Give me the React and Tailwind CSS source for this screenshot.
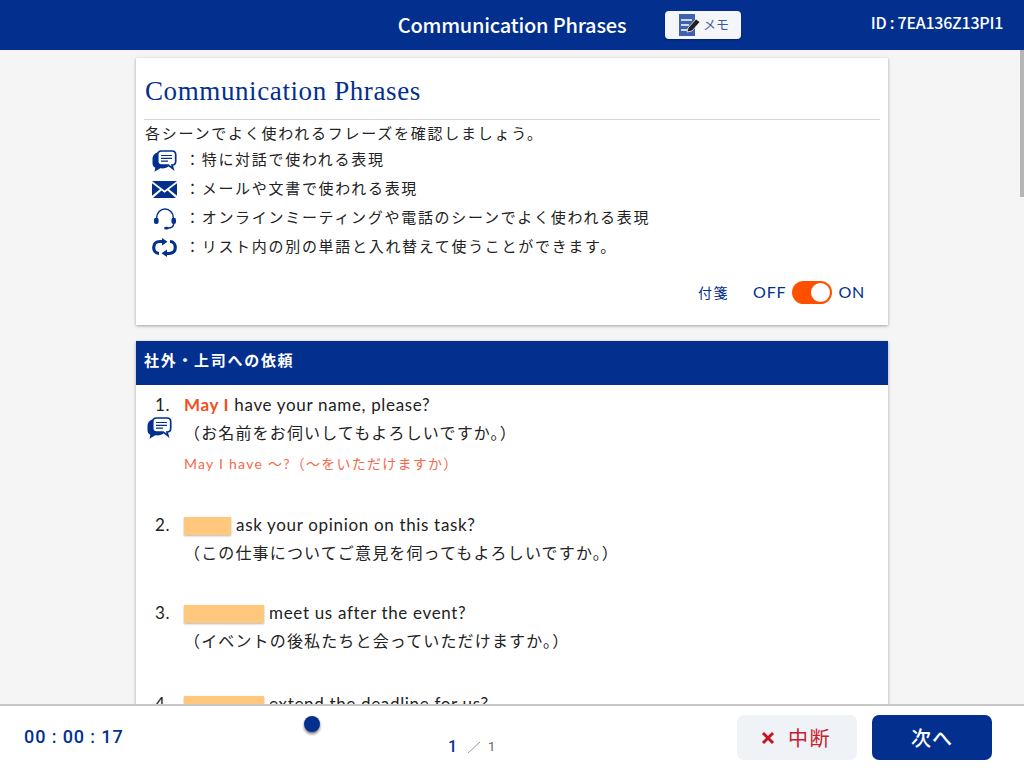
const jp = "font-['Lato','Noto_Sans_CJK_JP',sans-serif]";

function Chat({ className }) {
  return (
    <svg viewBox="0 0 25 22" className={className}>
      <path d="M6 2.500C2.500 3 .5 5.500 .5 9.500v3.500c0 2.500 1 4 2.800 4.800L2.500 21.700l5.800-3.400c3.500.4 6.800-.2 8.700-2.300L16 13.500H8C6.500 13.500 6 12 6 10.500Z" fill="#03308f" />
      <path d="M9.500 1h10.500c2.500 0 3.700 1.300 3.700 3.800v6.500c0 2.500-1.300 3.800-3.700 3.800l1 3.600-4.700-3.600H9.500c-2.500 0-3.800-1.300-3.800-3.800V4.800C5.700 2.300 7 1 9.500 1Z" fill="#fff" stroke="#03308f" strokeWidth="1.700" />
      <path d="M9 5.500h11M9 8.300h11M9 11.100h7" stroke="#03308f" strokeWidth="1.200" />
    </svg>
  );
}
function Mail({ className }) {
  return (
    <svg viewBox="0 0 25 17" className={className}>
      <path d="M0 0h25L12.500 9.500Z" fill="#03308f" />
      <path d="M0 2.200 8 8.300 0 14.800ZM25 2.200 17 8.300l8 6.500ZM9.500 9.500l3 2.300 3-2.300L24 17H1Z" fill="#03308f" />
    </svg>
  );
}
function Headset({ className }) {
  return (
    <svg viewBox="0 0 26 24" className={className}>
      <path d="M4 12V10.500C4 5 8 1.200 13 1.200S22 5 22 10.500V12" fill="none" stroke="#03308f" strokeWidth="1.600" />
      <rect x="1" y="10.500" width="5" height="7" rx="2.200" fill="#03308f" />
      <rect x="20" y="10.500" width="5" height="7" rx="2.200" fill="#03308f" />
      <path d="M22.500 17c0 3.500-3 5-7 5" fill="none" stroke="#03308f" strokeWidth="1.600" />
      <ellipse cx="14.500" cy="22" rx="2.500" ry="1.500" fill="#03308f" />
    </svg>
  );
}
function Swap({ className }) {
  return (
    <svg viewBox="0 0 25 19" className={className}>
      <path d="M7 15.500C3.500 15.500 1.700 12.500 1.700 9.500 1.700 6 4 3.500 8 3.500h2.500" fill="none" stroke="#03308f" strokeWidth="3.200" />
      <path d="M18 3.500c3.500 0 5.300 3 5.300 6 0 3.500-2.300 6-6.300 6h-2.500" fill="none" stroke="#03308f" strokeWidth="3.200" />
      <path d="M10 0l5.500 3.700L10 7.500ZM15 11.500 9.500 15.300 15 19Z" fill="#03308f" />
    </svg>
  );
}

const legend = [
  [Chat, "w-[25px] h-[22px]", "：特に対話で使われる表現"],
  [Mail, "w-[25px] h-[17px]", "：メールや文書で使われる表現"],
  [Headset, "w-[26px] h-[22px]", "：オンラインミーティングや電話のシーンでよく使われる表現"],
  [Swap, "w-[25px] h-[19px]", "：リスト内の別の単語と入れ替えて使うことができます。"],
];

function Blank({ w }) {
  return <span className={`inline-block h-[18px] align-[-4px] bg-[#ffc87d] shadow-[0_1px_2px_rgba(0,0,0,0.3)] ${w}`} />;
}

function Item({ n, en, ja, extra, icon, className }) {
  return (
    <div className={`relative flex ${className}`}>
      <span className="w-[48px] shrink-0 pl-[19px] text-[17px] leading-[24px] tracking-[0.6px]">{n}.</span>
      <div>
        <p className="text-[17px] leading-[24px] tracking-[0.67px] text-[#222]">{en}</p>
        {ja && <p className="mt-[4px] text-[16px] leading-[24px] tracking-[1.15px] text-[#222]">{ja}</p>}
        {extra}
      </div>
      {icon}
    </div>
  );
}

export default function App() {
  return (
    <div className={`h-[768px] w-[1024px] overflow-hidden flex flex-col bg-[#f5f5f5] text-[#222] ${jp}`}>
      <header className="relative h-[50px] shrink-0 bg-[#03308f] flex items-center justify-center text-white">
        <h1 className="text-[20px] font-medium tracking-[-0.2px] font-['Noto_Sans_CJK_JP',sans-serif]">Communication Phrases</h1>
        <button className="absolute left-[665px] top-[11px] w-[76px] h-[28px] rounded-[4px] bg-[#f4f6fa] shadow-[0_1px_2px_rgba(0,0,0,0.3)] flex items-center pl-[14px] text-[13px] text-[#3f5a9a]">
          <svg viewBox="0 0 22 22" className="w-[22px] h-[22px] shrink-0">
            <rect x="0" y="0" width="16" height="22" fill="#3f62b0" />
            <path d="M2 6h11M2 11h8M2 16h7" stroke="#fff" strokeWidth="1.600" />
            <path d="M8 18l1-4 8-9 4 3-8 9Z" fill="#222" stroke="#f4f6fa" strokeWidth="0.800" />
          </svg>
          <span className="ml-[2px]">メモ</span>
        </button>
        <span className="absolute right-[21px] top-[10px] text-[16px] font-medium tracking-[-0.25px] font-['Noto_Sans_CJK_JP',sans-serif]">ID : 7EA136Z13PI1</span>
      </header>

      <main className="relative flex-1 min-h-0 overflow-hidden flex flex-col items-center pt-[8px]">
        <div className="absolute right-0 top-0 w-[4px] h-[147px] bg-[#b5b5b5]" />
        <section className="w-[752px] h-[267px] shrink-0 bg-white shadow-[0_1px_3px_rgba(0,0,0,0.35)] px-[8px] pt-[17px]">
          <h2 className="pl-px text-[27px] leading-[32px] tracking-[0.6px] text-[#03308f] font-['Liberation_Serif',serif] pb-[12px] border-b border-[#d5d5d5]">Communication Phrases</h2>
          <p className="pl-px mt-[1px] text-[15px] leading-[24px] tracking-[1.75px]">各シーンでよく使われるフレーズを確認しましょう。</p>
          <ul className="mt-[1px]">
            {legend.map(([Icon, size, text]) => (
              <li key={text} className="flex items-center h-[29px]">
                <span className="w-[41px] pl-[8px] flex justify-start shrink-0"><Icon className={size} /></span>
                <span className="text-[15px] leading-[24px] tracking-[1.7px] -mt-[3px]">{text}</span>
              </li>
            ))}
          </ul>
          <div className="mt-[18px] flex items-center justify-end pr-[15px] text-[#03308f] text-[16px] tracking-[0.8px]">
            <span className="text-[14px] tracking-[1.5px] mr-[24px]">付箋</span>
            <span>OFF</span>
            <span className="mx-[6px] w-[40px] h-[23px] rounded-full bg-[#ff5000] relative">
              <span className="absolute right-[2px] top-[2px] w-[19px] h-[19px] rounded-full bg-white" />
            </span>
            <span>ON</span>
          </div>
        </section>

        <section className="mt-[16px] w-[752px] shrink-0 bg-white shadow-[0_1px_3px_rgba(0,0,0,0.35)]">
          <h3 className="h-[44px] pb-[6px] bg-[#03308f] text-white font-bold text-[15px] tracking-[1.7px] flex items-center px-[8px]">社外・上司への依頼</h3>
          <div className="pt-[8px]">
            <Item
              n="1"
              en={<><b className="font-bold text-[#f0501e]">May I</b> have your name, please?</>}
              ja="（お名前をお伺いしてもよろしいですか。）"
              icon={<Chat className="absolute left-[11px] top-[24px] w-[25px] h-[22px]" />}
              extra={<p className="mt-[7px] text-[14px] leading-[24px] tracking-[1.25px] text-[#f4694a]">May I have ～?（～をいただけますか）</p>}
              className="h-[120px]"
            />
            <Item n="2" en={<><Blank w="w-[47px]" /> ask your opinion on this task?</>} ja="（この仕事についてご意見を伺ってもよろしいですか。）" className="h-[88px]" />
            <Item n="3" en={<><Blank w="w-[80px]" /> meet us after the event?</>} ja="（イベントの後私たちと会っていただけますか。）" className="h-[91px]" />
            <Item n="4" en={<><Blank w="w-[80px]" /> extend the deadline for us?</>} className="h-[89px]" />
          </div>
        </section>
      </main>

      <footer className="relative h-[64px] shrink-0 bg-white border-t-2 border-[#c8c8c8] flex items-center">
        <span className="absolute left-[24px] top-[17px] text-[18px] leading-[28px] font-medium tracking-[0.9px] text-[#03308f] font-['Roboto',sans-serif]">00 : 00 : 17</span>
        <span className="absolute left-[304px] top-[10px] w-[16px] h-[16px] rounded-full bg-[#03308f] shadow-[0_2px_3px_rgba(0,0,0,0.55)]" />
        <span className="absolute left-[448px] top-[31px] flex items-center font-['Roboto',sans-serif]">
          <span className="text-[16px] leading-[20px] font-medium text-[#03308f]">1</span>
          <svg viewBox="0 0 12 12" className="ml-[11px] mr-[8px] w-[12px] h-[12px]"><path d="M0 12 12 1" stroke="#999" strokeWidth="1" /></svg>
          <span className="text-[13px] leading-[20px] text-[#666]">1</span>
        </span>
        <button className="absolute left-[737px] top-[9px] w-[120px] h-[45px] rounded-[7px] bg-[#eff2f7] flex items-center justify-center text-[#c8202a] text-[20px] tracking-[1.5px] font-['Noto_Sans_CJK_JP',sans-serif]">
          <svg viewBox="0 0 14 14" className="w-[14px] h-[14px] mr-[13px] -ml-[2px]"><path d="M2 2l10 10M12 2 2 12" stroke="#c8141e" strokeWidth="3" /></svg>
          中断
        </button>
        <button className="absolute left-[872px] top-[9px] w-[120px] h-[45px] rounded-[7px] bg-[#03308f] flex items-center justify-center text-white text-[20px] font-medium tracking-[1px] font-['Noto_Sans_CJK_JP',sans-serif]">次へ</button>
      </footer>
    </div>
  );
}
